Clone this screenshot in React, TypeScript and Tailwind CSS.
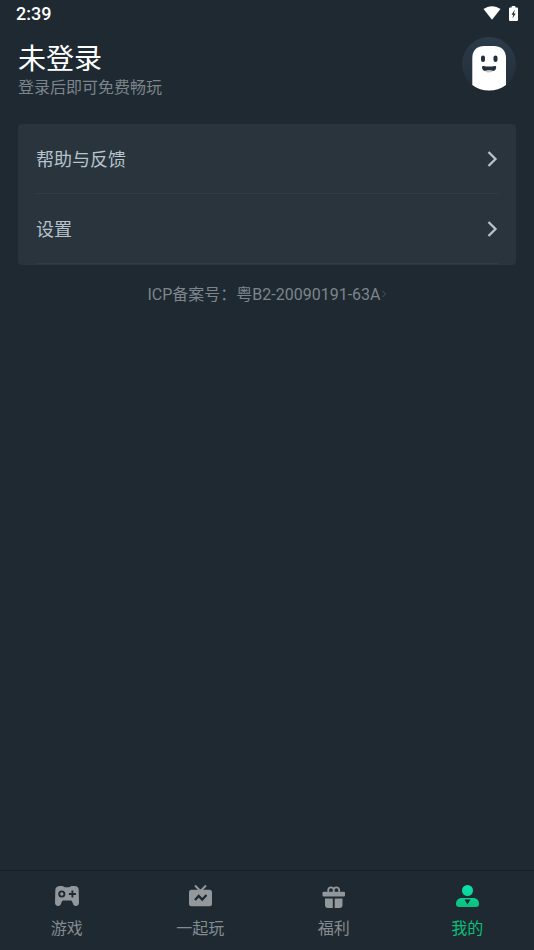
import type { ReactNode } from "react";

function WifiIcon() {
  return (
    <svg width="18" height="14" viewBox="0 0 18 14" fill="#fff" aria-hidden="true">
      <path d="M0.5 3.1C5.5-.8 12.5-.8 17.5 3.1L9 13.8Z" />
    </svg>
  );
}

function BatteryIcon() {
  return (
    <svg width="9" height="15" viewBox="0 0 9 15" aria-hidden="true">
      <path d="M2.7 0h3.6v1.4H8a1 1 0 0 1 1 1V14a1 1 0 0 1-1 1H1a1 1 0 0 1-1-1V2.400a1 1 0 0 1 1-1h1.700z" fill="#fff" />
      <path d="M6 3.500 2.500 8.800h1.800l-.9 3.800L6.700 7.600H4.800z" fill="#1f2931" />
    </svg>
  );
}

function Avatar() {
  return (
    <svg width="54" height="54" viewBox="0 0 54 54" aria-hidden="true">
      <defs>
        <linearGradient id="avatarBg" x1="0" y1="0" x2="0" y2="1">
          <stop offset="0" stopColor="#2c3b49" />
          <stop offset="1" stopColor="#212e3a" />
        </linearGradient>
      </defs>
      <circle cx="27" cy="27" r="27" fill="url(#avatarBg)" />
      <path d="M10.300 48V21C10.300 12.500 16 9 22 9h10c6 0 12 3.500 12 12v27c-5 3.700-11 5.600-17 5.600S15.300 51.700 10.300 48Z" fill="#fff" />
      <rect x="19" y="18.500" width="4" height="6.500" rx="2" fill="#22303c" />
      <rect x="31.500" y="18.500" width="4" height="6.500" rx="2" fill="#22303c" />
      <path d="M22.800 33q4.300-2 8.600 0-1 2.600-4.300 2.600T22.800 33Z" fill="#c2c5c8" />
      <path d="M20 30.300q0-1.600 1.600-1.200 5.500 1 11 0 1.600-.4 1.600 1.200c0 2-1.200 3.300-2.800 3.700-2.600-1.300-6-1.300-8.600 0-1.600-.4-2.800-1.700-2.800-3.700Z" fill="#22303c" />
    </svg>
  );
}

function Chevron() {
  return (
    <svg width="12" height="16" viewBox="0 0 12 16" fill="none" stroke="#b5c3cc" strokeWidth="2.300" aria-hidden="true">
      <path d="M2.500 1 9.500 8 2.500 15" />
    </svg>
  );
}

function GamepadIcon() {
  return (
    <svg width="24" height="24" viewBox="0 0 24 24" aria-hidden="true">
      <path d="M4.800 2h2.500c1 0 1.700 1.200 2.700 1.200h4c1 0 1.700-1.200 2.700-1.200h2.500C22.500 2 23.600 3.500 23.700 6L24 18.500c0 2.300-1.200 3.500-3 3.500-1.600 0-2.500-.8-3-2.200l-.8-2.100c-.3-.8-.8-1.200-1.600-1.200H8.400c-.8 0-1.300.4-1.600 1.200L6 19.800C5.500 21.200 4.600 22 3 22c-1.800 0-3-1.200-3-3.500L.3 6C.4 3.500 2.500 2 4.800 2Z" fill="#92989c" />
      <circle cx="6.800" cy="10" r="2.600" fill="none" stroke="#1f2931" strokeWidth="1.900" />
      <path d="M17.400 6.500v7M13.900 10h7" stroke="#1f2931" strokeWidth="1.900" />
    </svg>
  );
}

function TvIcon() {
  return (
    <svg width="24" height="24" viewBox="0 0 24 24" fill="none" aria-hidden="true">
      <path d="M7 1.500 12.500 7 18 1.500" stroke="#92989c" strokeWidth="2" />
      <rect x="1" y="5.800" width="23" height="16.400" rx="2.500" fill="#92989c" />
      <path d="m7 16 3.700-4 3.500 3.500 4.300-4.500" stroke="#1f2931" strokeWidth="2.300" />
    </svg>
  );
}

function GiftIcon() {
  return (
    <svg width="24" height="24" viewBox="0 0 24 24" fill="#92989c" aria-hidden="true">
      <rect x="0.500" y="7.800" width="22.500" height="4.700" rx="1" />
      <path d="M3 14.500h7.800V24H6a3 3 0 0 1-3-3zM12.700 14.500h7.800V21a3 3 0 0 1-3 3h-4.800z" />
      <path d="M11.700 8.500V5.500a2.800 2.800 0 1 0-5 2.300M11.700 5.500a2.800 2.800 0 1 1 5 2.300" fill="none" stroke="#92989c" strokeWidth="1.900" />
    </svg>
  );
}

function UserIcon() {
  return (
    <svg width="24" height="24" viewBox="0 0 24 24" aria-hidden="true">
      <defs>
        <linearGradient id="userFill" x1="0" y1="0" x2="0" y2="24" gradientUnits="userSpaceOnUse">
          <stop offset="0" stopColor="#0be5b2" />
          <stop offset="1" stopColor="#0abf78" />
        </linearGradient>
      </defs>
      <circle cx="12.500" cy="6.500" r="5.500" fill="url(#userFill)" />
      <path d="M7 14h11c4 0 6 2.500 6 6 0 2-1 3-3 3H4c-2 0-3-1-3-3 0-3.500 2-6 6-6Z" fill="url(#userFill)" />
      <path d="M9.500 15.500h6L12.500 20.500Z" fill="#1f2931" />
    </svg>
  );
}

function MenuRow({ label }: { label: string }) {
  return (
    <li className="px-[18px]">
      <button type="button" className="flex h-[70px] w-full items-center justify-between border-b border-[#303d46] text-lg text-[#b5c3cc]">
        <span className="pt-0.5">{label}</span>
        <Chevron />
      </button>
    </li>
  );
}

function Tab({ label, icon, active = false }: { label: string; icon: ReactNode; active?: boolean }) {
  return (
    <button
      type="button"
      aria-current={active ? "page" : undefined}
      className={`flex flex-1 flex-col items-center gap-[9px] pt-[13px] text-base ${active ? "text-[#0abf78]" : "text-[#858c91]"}`}
    >
      {icon}
      <span>{label}</span>
    </button>
  );
}

export default function App() {
  return (
    <div className="flex min-h-screen flex-col bg-[#1f2931] font-[Roboto,'Noto_Sans_CJK_SC',sans-serif]" lang="zh-CN">
      <div className="flex h-7 items-center justify-between px-4 text-lg font-medium text-white">
        <span>2:39</span>
        <div className="flex items-center gap-2 pb-0.5">
          <WifiIcon />
          <BatteryIcon />
        </div>
      </div>

      <header className="flex items-start justify-between px-[18px] pt-[9px]">
        <div className="pt-[3px]">
          <h1 className="text-[28px] leading-10 text-white">未登录</h1>
          <p className="text-base leading-4 text-[#7c858c]">登录后即可免费畅玩</p>
        </div>
        <button type="button" aria-label="未登录">
          <Avatar />
        </button>
      </header>

      <main className="grow px-[18px] pt-7">
        <ul className="rounded bg-[#2a343d] pb-px">
          <MenuRow label="帮助与反馈" />
          <MenuRow label="设置" />
        </ul>
        <a href="#icp" className="mt-[18px] flex items-center justify-center text-base text-[#7c858c]">
          ICP备案号：粤B2-20090191-63A
          <svg width="6" height="10" viewBox="0 0 6 10" fill="none" stroke="#4b555d" aria-hidden="true">
            <path d="m1.500 1 3 3-3 3" />
          </svg>
        </a>
      </main>

      <nav className="flex h-20 border-t border-[#182027]">
        <Tab label="游戏" icon={<GamepadIcon />} />
        <Tab label="一起玩" icon={<TvIcon />} />
        <Tab label="福利" icon={<GiftIcon />} />
        <Tab label="我的" icon={<UserIcon />} active />
      </nav>
    </div>
  );
}
